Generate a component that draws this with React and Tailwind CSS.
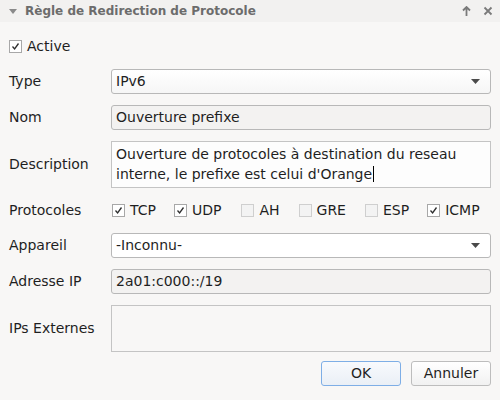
const font = { fontFamily: '"DejaVu Sans", "Liberation Sans", sans-serif' };

function Check({ checked, label, className = "" }) {
  return (
    <div className={`flex items-center ${className}`}>
      <span
        className={`flex h-[13px] w-[13px] items-center justify-center border ${
          checked ? "border-[#a8a8a8] bg-white" : "border-[#cfcfcf] bg-[#f3f3f3]"
        }`}
      >
        {checked && (
          <svg width="9" height="9" viewBox="0 0 9 9">
            <path d="M1.5 4.5 L3.6 7 L7.5 1.5" fill="none" stroke="#2e2e2e" strokeWidth="1.3" />
          </svg>
        )}
      </span>
      <span className="ml-[5px] text-[14px] text-[#1f1f1f]">{label}</span>
    </div>
  );
}

function Caret() {
  return (
    <svg width="9" height="6" viewBox="0 0 9 6" className="absolute right-[10px] top-1/2 -translate-y-1/2">
      <path d="M0 0 H9 L4.5 5 Z" fill="#4a4a4a" />
    </svg>
  );
}

function Row({ label, children, h = "h-[25px]", className = "" }) {
  return (
    <div className={`flex items-center ${className}`}>
      <div className="w-[102px] shrink-0 text-[14px] text-[#1f1f1f]">{label}</div>
      <div className={`flex-1 ${h}`}>{children}</div>
    </div>
  );
}

export default function App() {
  return (
    <div className="h-[400px] w-[500px] overflow-hidden bg-[#f8f7f6]" style={font}>
      <div className="flex h-[22px] items-center bg-[#f2f1f0] pl-[9px] pr-[7px]">
        <svg width="8" height="5" viewBox="0 0 8 5">
          <path d="M0 0 H8 L4 5 Z" fill="#8a8a8a" />
        </svg>
        <span className="ml-[8px] text-[12px] font-bold text-[#6c6c6c]">Règle de Redirection de Protocole</span>
        <div className="ml-auto flex items-center gap-[12px]">
          <svg width="9" height="10" viewBox="0 0 9 10">
            <path d="M4.5 1 V10 M1 4.5 L4.5 1 L8 4.5" fill="none" stroke="#7a7a7a" strokeWidth="1.8" />
          </svg>
          <svg width="10" height="10" viewBox="0 0 10 10">
            <path d="M1.5 1.5 L8.5 8.5 M8.5 1.5 L1.5 8.5" fill="none" stroke="#7a7a7a" strokeWidth="1.8" />
          </svg>
        </div>
      </div>

      <div className="px-[9px]">
        <Check checked label="Active" className="mt-[18px] h-[13px]" />

        <Row label="Type" className="mt-[16px]">
          <div className="relative flex h-full items-center rounded-[3px] border border-[#b8b8b8] bg-gradient-to-b from-white to-[#f6f6f6] px-[4px] text-[14px] text-[#1f1f1f]">
            IPv6
            <Caret />
          </div>
        </Row>

        <Row label="Nom" className="mt-[11px]">
          <div className="flex h-full items-center rounded-[3px] border border-[#b8b8b8] bg-[#f3f2f1] px-[4px] text-[14px] text-[#1f1f1f]">
            Ouverture prefixe
          </div>
        </Row>

        <Row label="Description" h="h-[47px]" className="mt-[11px]">
          <div className="h-full border border-[#c4c4c4] bg-[#fdfdfd] px-[4px] pt-[3px] text-[14px] leading-[18px] text-[#1f1f1f]">
            Ouverture de protocoles à destination du reseau
            <br />
            interne, le prefixe est celui d'Orange
            <span className="ml-[1px] inline-block h-[16px] w-[1px] translate-y-[3px] bg-black" />
          </div>
        </Row>

        <Row label="Protocoles" h="h-[45px]">
          <div className="flex h-full items-center">
            <Check checked label="TCP" className="ml-[1px]" />
            <Check checked label="UDP" className="ml-[18px]" />
            <Check label="AH" className="ml-[20px]" />
            <Check label="GRE" className="ml-[19px]" />
            <Check label="ESP" className="ml-[19px]" />
            <Check checked label="ICMP" className="ml-[18px]" />
          </div>
        </Row>

        <Row label="Appareil">
          <div className="relative flex h-full items-center rounded-[3px] border border-[#b8b8b8] bg-white px-[4px] text-[14px] text-[#1f1f1f]">
            -Inconnu-
            <Caret />
          </div>
        </Row>

        <Row label="Adresse IP" className="mt-[11px]">
          <div className="flex h-full items-center rounded-[3px] border border-[#b8b8b8] bg-[#f3f2f1] px-[4px] text-[14px] text-[#1f1f1f]">
            2a01:c000::/19
          </div>
        </Row>

        <Row label="IPs Externes" h="h-[47px]" className="mt-[11px]">
          <div className="h-full border border-[#c4c4c4] bg-[#f8f7f6]" />
        </Row>

        <div className="mt-[9px] flex justify-end gap-[10px]">
          <button className="h-[25px] w-[80px] rounded-[3px] border border-[#7eaee6] bg-gradient-to-b from-[#f8fafd] to-[#eaeff6] text-[14px] text-[#1f1f1f]">
            OK
          </button>
          <button className="h-[25px] w-[80px] rounded-[3px] border border-[#bdbdbd] bg-gradient-to-b from-white to-[#f1f1f1] text-[14px] text-[#1f1f1f]">
            Annuler
          </button>
        </div>
      </div>
    </div>
  );
}
